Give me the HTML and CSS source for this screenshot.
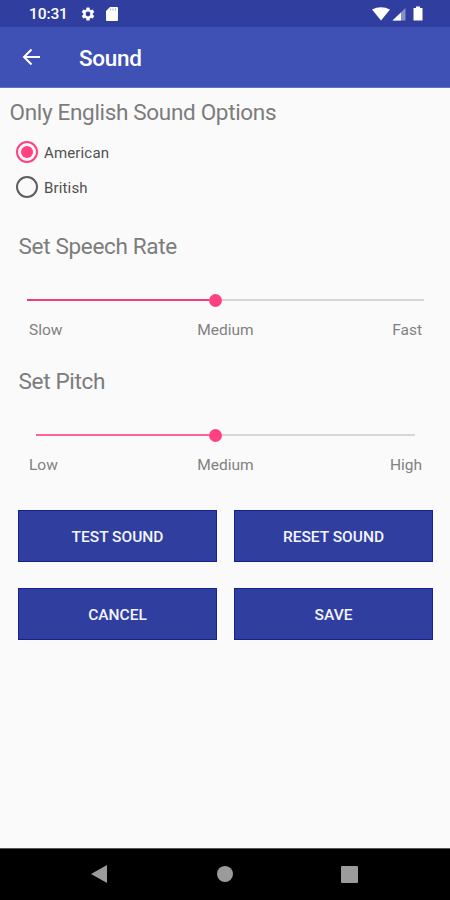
FILE: index.html
```html
<!DOCTYPE html>
<html lang="en">
<head>
<meta charset="utf-8">
<title>Sound</title>
<link rel="stylesheet" href="styles.css">
</head>
<body>
<div class="screen">
  <header class="status">
    <span class="clock">10:31</span>
    <svg class="gear" width="16" height="16" viewBox="0 0 24 24"><path fill="#fff" d="M19.14 12.94a7 7 0 0 0 0-1.88l2.03-1.58a.5.5 0 0 0 .12-.61l-1.92-3.32a.5.5 0 0 0-.59-.22l-2.39.96a7 7 0 0 0-1.62-.94l-.36-2.54a.5.5 0 0 0-.48-.41h-3.84a.5.5 0 0 0-.47.41l-.36 2.54a7 7 0 0 0-1.62.94l-2.39-.96a.5.5 0 0 0-.59.22L2.74 8.87a.5.5 0 0 0 .12.61l2.03 1.58a7 7 0 0 0 0 1.880l-2.03 1.58a.5.5 0 0 0-.12.61l1.92 3.32c.12.22.37.29.59.22l2.39-.96c.5.38 1.03.7 1.62.94l.36 2.54c.05.24.24.41.48.41h3.84c.24 0 .44-.17.47-.41l.36-2.54a7 7 0 0 0 1.62-.94l2.39.96c.22.08.47 0 .59-.22l1.92-3.32a.5.5 0 0 0-.12-.61zM12 15.6a3.6 3.6 0 1 1 0-7.2 3.6 3.6 0 0 1 0 7.2z"/></svg>
    <svg class="card" width="12" height="15" viewBox="0 0 12 15"><path fill="#fff" d="M4 0h7q1 0 1 1v12q0 1-1 1H1q-1 0-1-1V4z"/><path stroke="#a7aedb" stroke-width="1" d="M4.5 1.500v2M7 1.500v2M9.500 1.500v2"/></svg>
    <svg class="signals" width="52" height="16" viewBox="0 0 52 16"><path fill="#fff" d="M0 3.500Q9-1 18 3.500L9 14.500z"/><path fill="#8790ca" d="M33.500 2v12.500H20.500z"/><path fill="#fff" d="M29 6.500v8h-8.500z"/><path fill="#fff" d="M44 .5h4V2H50.500V14.500h-9V2H44z"/></svg>
  </header>
  <div class="toolbar">
    <svg width="20" height="18" viewBox="0 0 20 18"><path d="M19 9H2.500M10.500 1.500L3 9l7.500 7.500" fill="none" stroke="#fff" stroke-width="2"/></svg>
    <h1>Sound</h1>
  </div>
  <main>
    <h2 class="options-title"><span>Only English Sound Options</span></h2>
    <div class="radio"><i class="ring selected"></i><span>American</span></div>
    <div class="radio"><i class="ring"></i><span>British</span></div>
    <section class="setting rate">
      <h2>Set Speech Rate</h2>
      <div class="slider"><i class="fill"></i><i class="thumb"></i><i class="rest"></i></div>
      <div class="labels"><span>Slow</span><span>Medium</span><span>Fast</span></div>
    </section>
    <section class="setting pitch">
      <h2>Set Pitch</h2>
      <div class="slider"><i class="fill"></i><i class="thumb"></i><i class="rest"></i></div>
      <div class="labels"><span>Low</span><span>Medium</span><span>High</span></div>
    </section>
    <div class="buttons">
      <button>TEST SOUND</button><button>RESET SOUND</button>
      <button>CANCEL</button><button>SAVE</button>
    </div>
  </main>
  <nav>
    <svg width="16" height="18" viewBox="0 0 16 18"><path fill="#9b9b9b" d="M16 0v18L0 9z"/></svg>
    <i class="home"></i>
    <i class="recent"></i>
  </nav>
</div>
</body>
</html>
```
FILE: styles.css
```css
* { box-sizing: border-box; }
body { margin: 0; font-family: Roboto, sans-serif; }
.screen { width: 450px; height: 900px; display: flex; flex-direction: column; background: #fafafa; overflow: hidden; }
.status { height: 27px; background: #303f9f; display: flex; align-items: center; padding: 1px 26px 0 29px; color: #fff; }
.clock { width: 51px; font-size: 15.5px; font-weight: 500; line-height: 27px; letter-spacing: -.1px; }
.card { margin-left: 10px; }
.signals { margin-left: auto; }
.toolbar { height: 61px; background: #3f51b5; border-bottom: 1px solid #6473c3; display: flex; align-items: center; padding-left: 21px; }
.toolbar h1 { margin: 2px 0 0 38px; color: #fff; font-size: 22.5px; font-weight: 500; line-height: 28px; letter-spacing: -.3px; }
main { flex: 1; }
h2 { margin: 0; font-size: 22.5px; font-weight: 400; line-height: 28px; letter-spacing: -.32px; color: #7c7c7c; }
.options-title { padding: 10px 0 0 9.5px; height: 46px; }
.radio { height: 35px; display: flex; align-items: center; padding-left: 16px; gap: 6px; font-size: 15px; letter-spacing: .15px; color: #505050; }
.radio span { padding-top: 2px; }
.ring { width: 22px; height: 22px; border: 2px solid #5e5e5e; border-radius: 50%; display: grid; place-items: center; }
.ring.selected { border-color: #ff4081; }
.ring.selected::after { content: ""; width: 12px; height: 12px; border-radius: 50%; background: #ff4081; }
.setting { height: 135px; }
.rate { margin-top: 28px; }
.setting h2 { padding-left: 18.5px; }
.slider { height: 14px; margin: 33px 26px 0 27px; display: flex; align-items: center; }
.fill { width: 182px; height: 2px; background: #f13b7c; }
.thumb { width: 13px; height: 13px; border-radius: 50%; background: #ff4081; }
.rest { flex: 1; height: 2px; background: #d6d6d6; }
.pitch .slider { margin-left: 36px; margin-right: 35px; }
.pitch .fill { width: 173px; background: #ff6298; }
.labels { display: grid; grid-template-columns: 1fr auto 1fr; margin: 13px 28px 0 29px; font-size: 15.5px; line-height: 20px; color: #818181; }
.labels span:last-child { text-align: right; }
.buttons { margin: 8px 17px 0 18px; display: grid; grid-template-columns: 199px 199px; grid-auto-rows: 52px; column-gap: 17px; row-gap: 26.4px; }
button { border: 1px solid #152292; background: #303f9f; color: #f4f5ff; padding: 1px 0 0; font: 500 15.5px/20px Roboto, sans-serif; }
nav { height: 52px; background: #000; border-top: 1px solid #555; display: flex; align-items: center; padding: 0 0 1px 91px; }
.home { width: 16px; height: 16px; margin-left: 110px; border-radius: 50%; background: #9b9b9b; }
.recent { width: 17px; height: 17px; margin-left: 108px; border-radius: 1px; background: #9b9b9b; }
```
